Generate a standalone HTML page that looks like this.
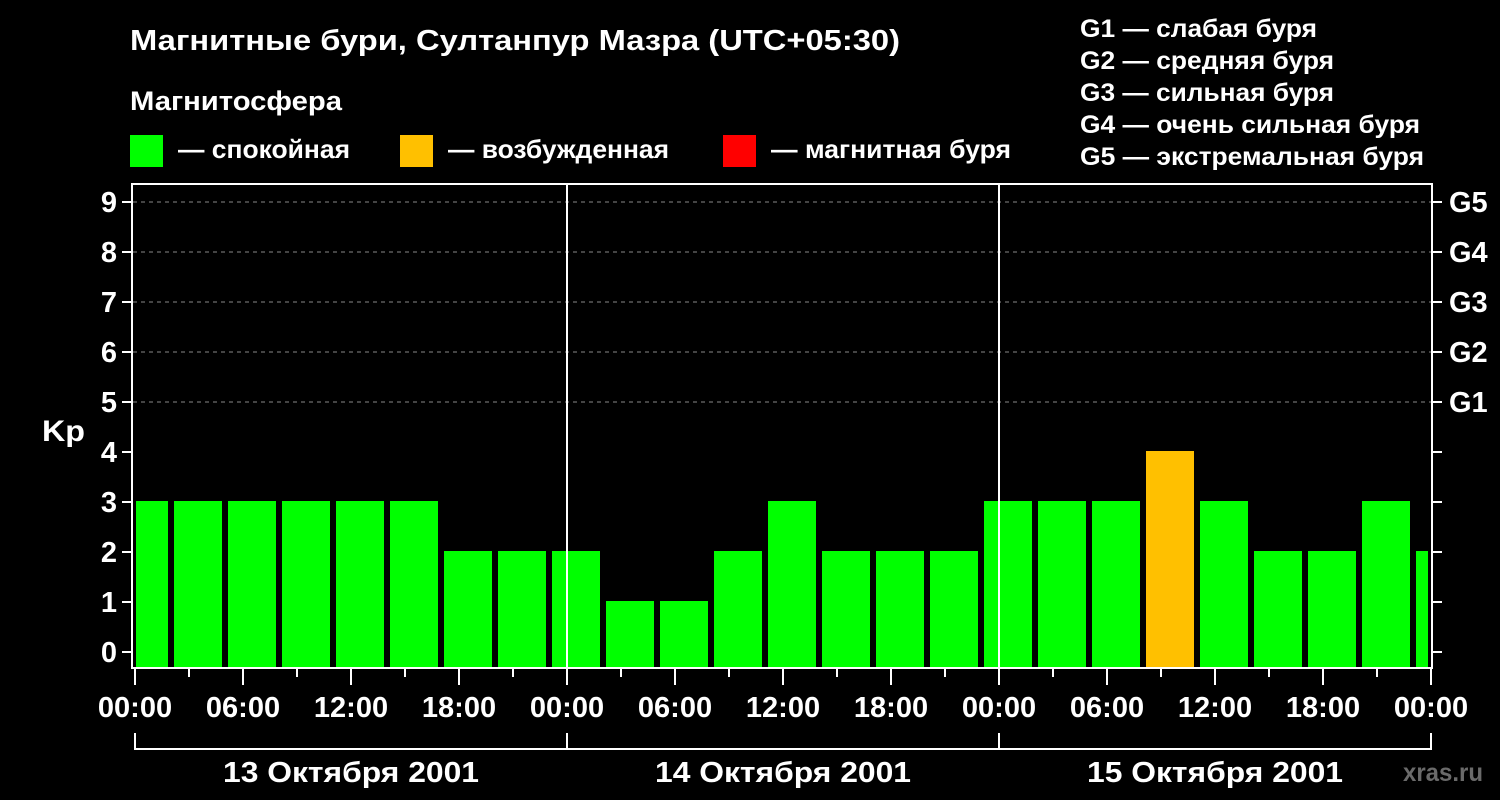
<!DOCTYPE html>
<html><head><meta charset="utf-8"><style>
html,body{margin:0;padding:0;background:#000;width:1500px;height:800px;overflow:hidden}
svg{display:block}
text{font-family:"Liberation Sans",sans-serif;font-weight:bold;fill:#fff}
</style></head><body>
<svg width="1500" height="800" viewBox="0 0 1500 800" xmlns="http://www.w3.org/2000/svg">
<rect width="1500" height="800" fill="#000"/>
<text x="130" y="50" font-size="29" textLength="770" lengthAdjust="spacingAndGlyphs">Магнитные бури, Султанпур Мазра (UTC+05:30)</text>
<text x="130" y="110" font-size="27" textLength="212" lengthAdjust="spacingAndGlyphs">Магнитосфера</text>
<rect x="130" y="135" width="33" height="32" fill="#00ff00"/>
<text x="178" y="158" font-size="26" textLength="172" lengthAdjust="spacingAndGlyphs">— спокойная</text>
<rect x="400" y="135" width="33" height="32" fill="#ffc000"/>
<text x="448" y="158" font-size="26" textLength="221" lengthAdjust="spacingAndGlyphs">— возбужденная</text>
<rect x="723" y="135" width="33" height="32" fill="#ff0000"/>
<text x="771" y="158" font-size="26" textLength="240" lengthAdjust="spacingAndGlyphs">— магнитная буря</text>
<g font-size="25">
<text x="1080" y="37" textLength="237" lengthAdjust="spacingAndGlyphs">G1 — слабая буря</text>
<text x="1080" y="69" textLength="254" lengthAdjust="spacingAndGlyphs">G2 — средняя буря</text>
<text x="1080" y="101" textLength="254" lengthAdjust="spacingAndGlyphs">G3 — сильная буря</text>
<text x="1080" y="133" textLength="340" lengthAdjust="spacingAndGlyphs">G4 — очень сильная буря</text>
<text x="1080" y="165" textLength="344" lengthAdjust="spacingAndGlyphs">G5 — экстремальная буря</text>
</g>
<g stroke="#888" stroke-width="1" stroke-dasharray="4,4">
<line x1="133" y1="202" x2="1432" y2="202"/>
<line x1="133" y1="252" x2="1432" y2="252"/>
<line x1="133" y1="302" x2="1432" y2="302"/>
<line x1="133" y1="352" x2="1432" y2="352"/>
<line x1="133" y1="402" x2="1432" y2="402"/>
</g>
<g fill="#00ff00">
<rect x="136" y="501" width="32" height="167"/>
<rect x="174" y="501" width="48" height="167"/>
<rect x="228" y="501" width="48" height="167"/>
<rect x="282" y="501" width="48" height="167"/>
<rect x="336" y="501" width="48" height="167"/>
<rect x="390" y="501" width="48" height="167"/>
<rect x="444" y="551" width="48" height="117"/>
<rect x="498" y="551" width="48" height="117"/>
<rect x="552" y="551" width="48" height="117"/>
<rect x="606" y="601" width="48" height="67"/>
<rect x="660" y="601" width="48" height="67"/>
<rect x="714" y="551" width="48" height="117"/>
<rect x="768" y="501" width="48" height="167"/>
<rect x="822" y="551" width="48" height="117"/>
<rect x="876" y="551" width="48" height="117"/>
<rect x="930" y="551" width="48" height="117"/>
<rect x="984" y="501" width="48" height="167"/>
<rect x="1038" y="501" width="48" height="167"/>
<rect x="1092" y="501" width="48" height="167"/>
<rect x="1200" y="501" width="48" height="167"/>
<rect x="1254" y="551" width="48" height="117"/>
<rect x="1308" y="551" width="48" height="117"/>
<rect x="1362" y="501" width="48" height="167"/>
<rect x="1416" y="551" width="12" height="117"/>
</g>
<rect x="1146" y="451" width="48" height="217" fill="#ffc000"/>
<g stroke="#fff" stroke-width="2" fill="none">
<rect x="132" y="184" width="1300" height="484"/>
<line x1="567" y1="184" x2="567" y2="668"/>
<line x1="999" y1="184" x2="999" y2="668"/>
</g>
<g stroke="#fff" stroke-width="2">
<line x1="122" y1="202" x2="132" y2="202"/><line x1="122" y1="252" x2="132" y2="252"/>
<line x1="122" y1="302" x2="132" y2="302"/><line x1="122" y1="352" x2="132" y2="352"/>
<line x1="122" y1="402" x2="132" y2="402"/><line x1="122" y1="452" x2="132" y2="452"/>
<line x1="122" y1="502" x2="132" y2="502"/><line x1="122" y1="552" x2="132" y2="552"/>
<line x1="122" y1="602" x2="132" y2="602"/><line x1="122" y1="652" x2="132" y2="652"/>
<line x1="1432" y1="202" x2="1442" y2="202"/><line x1="1432" y1="252" x2="1442" y2="252"/>
<line x1="1432" y1="302" x2="1442" y2="302"/><line x1="1432" y1="352" x2="1442" y2="352"/>
<line x1="1432" y1="402" x2="1442" y2="402"/><line x1="1432" y1="452" x2="1442" y2="452"/>
<line x1="1432" y1="502" x2="1442" y2="502"/><line x1="1432" y1="552" x2="1442" y2="552"/>
<line x1="1432" y1="602" x2="1442" y2="602"/><line x1="1432" y1="652" x2="1442" y2="652"/>
<line x1="135" y1="668" x2="135" y2="685"/><line x1="189" y1="668" x2="189" y2="677"/>
<line x1="243" y1="668" x2="243" y2="685"/><line x1="297" y1="668" x2="297" y2="677"/>
<line x1="351" y1="668" x2="351" y2="685"/><line x1="405" y1="668" x2="405" y2="677"/>
<line x1="459" y1="668" x2="459" y2="685"/><line x1="513" y1="668" x2="513" y2="677"/>
<line x1="567" y1="668" x2="567" y2="685"/><line x1="621" y1="668" x2="621" y2="677"/>
<line x1="675" y1="668" x2="675" y2="685"/><line x1="729" y1="668" x2="729" y2="677"/>
<line x1="783" y1="668" x2="783" y2="685"/><line x1="837" y1="668" x2="837" y2="677"/>
<line x1="891" y1="668" x2="891" y2="685"/><line x1="945" y1="668" x2="945" y2="677"/>
<line x1="999" y1="668" x2="999" y2="685"/><line x1="1053" y1="668" x2="1053" y2="677"/>
<line x1="1107" y1="668" x2="1107" y2="685"/><line x1="1161" y1="668" x2="1161" y2="677"/>
<line x1="1215" y1="668" x2="1215" y2="685"/><line x1="1269" y1="668" x2="1269" y2="677"/>
<line x1="1323" y1="668" x2="1323" y2="685"/><line x1="1377" y1="668" x2="1377" y2="677"/>
<line x1="1431" y1="668" x2="1431" y2="685"/>
</g>
<g font-size="29" text-anchor="end">
<text x="117" y="212">9</text><text x="117" y="262">8</text><text x="117" y="312">7</text>
<text x="117" y="362">6</text><text x="117" y="412">5</text><text x="117" y="462">4</text>
<text x="117" y="512">3</text><text x="117" y="562">2</text><text x="117" y="612">1</text>
<text x="117" y="662">0</text>
</g>
<text x="42" y="441" font-size="30" textLength="43" lengthAdjust="spacingAndGlyphs">Kp</text>
<g font-size="29">
<text x="1449" y="212">G5</text><text x="1449" y="262">G4</text><text x="1449" y="312">G3</text>
<text x="1449" y="362">G2</text><text x="1449" y="412">G1</text>
</g>
<g font-size="29" text-anchor="middle">
<text x="135" y="717">00:00</text><text x="243" y="717">06:00</text><text x="351" y="717">12:00</text>
<text x="459" y="717">18:00</text><text x="567" y="717">00:00</text><text x="675" y="717">06:00</text>
<text x="783" y="717">12:00</text><text x="891" y="717">18:00</text><text x="999" y="717">00:00</text>
<text x="1107" y="717">06:00</text><text x="1215" y="717">12:00</text><text x="1323" y="717">18:00</text>
<text x="1431" y="717">00:00</text>
<text x="351" y="782" textLength="256" lengthAdjust="spacingAndGlyphs">13 Октября 2001</text>
<text x="783" y="782" textLength="256" lengthAdjust="spacingAndGlyphs">14 Октября 2001</text>
<text x="1215" y="782" textLength="256" lengthAdjust="spacingAndGlyphs">15 Октября 2001</text>
</g>
<text x="1403" y="781" font-size="25" textLength="80" lengthAdjust="spacingAndGlyphs" style="fill:#6a6a6a">xras.ru</text>
<g fill="#fff">
<rect x="134" y="748" width="1298" height="2"/>
<rect x="134" y="733" width="2" height="17"/>
<rect x="566" y="733" width="2" height="17"/>
<rect x="998" y="733" width="2" height="17"/>
<rect x="1430" y="733" width="2" height="17"/>
</g>
</svg>
</body></html>
